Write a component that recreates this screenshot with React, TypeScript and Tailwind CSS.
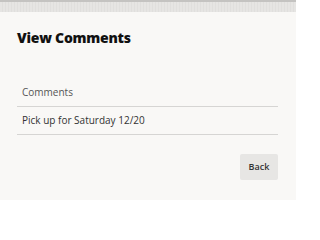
export default function App() {
  return (
    <div className="w-[296px] h-[200px] bg-[#f9f8f6] overflow-hidden" style={{ fontFamily: '"Open Sans", "Noto Sans", sans-serif' }}>
      <div className="h-[2px] bg-[#c4c3c1]" />
      <div className="h-[10px] bg-[#e4e3e1] bg-[repeating-linear-gradient(90deg,#e6e5e3_0px,#e6e5e3_2px,#e0dfdd_2px,#e0dfdd_3px)]" />
      <div className="px-[17px] pt-[16px]">
        <h1 className="text-[14px] font-extrabold tracking-[-0.25px] text-[#111] leading-[20px]">View Comments</h1>
        <div className="mt-[31px] w-[261px]">
          <div className="px-[5px] h-[28px] flex items-center text-[10px] text-[#555] border-b border-[#d6d5d3]">Comments</div>
          <div className="px-[5px] h-[28px] flex items-center text-[10px] text-[#333] border-b border-[#d6d5d3]">Pick up for Saturday 12/20</div>
        </div>
        <div className="w-[261px] flex justify-end mt-[19px]">
          <button className="w-[38px] h-[26px] rounded-[2px] bg-[#e7e6e4] text-[9px] font-semibold text-[#333]">Back</button>
        </div>
      </div>
    </div>
  );
}
